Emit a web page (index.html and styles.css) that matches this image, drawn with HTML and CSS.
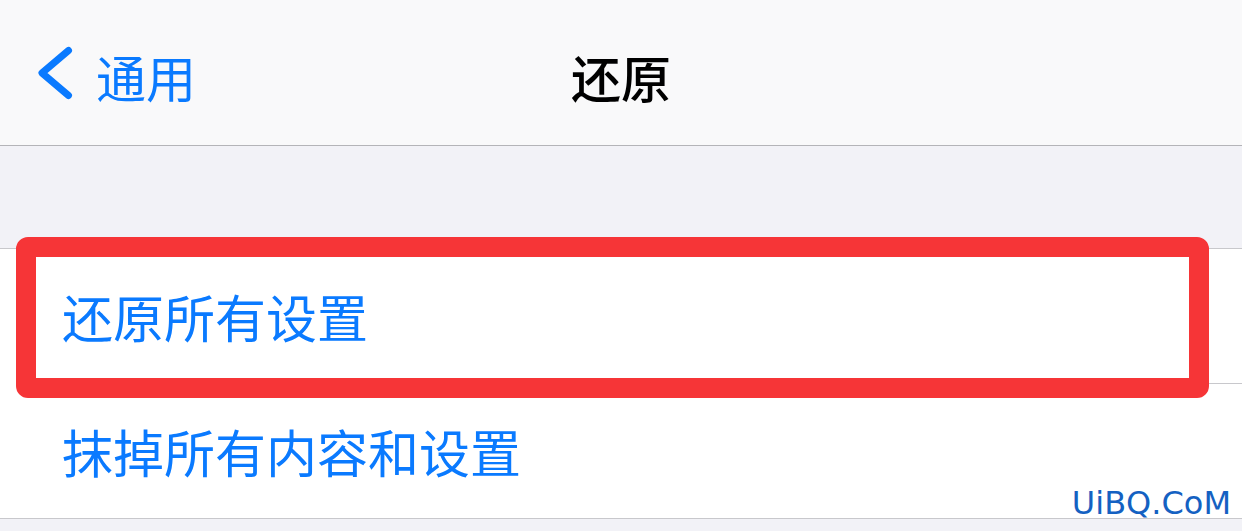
FILE: index.html
```html
<!DOCTYPE html>
<html lang="zh-CN">
<head>
<meta charset="utf-8">
<title>还原</title>
<link rel="stylesheet" href="styles.css">
</head>
<body>
  <header class="nav">
    <div class="back">
      <svg class="chevron" width="40" height="60" viewBox="0 0 40 60" aria-hidden="true">
        <polyline points="32.5,7.5 6,30 32.5,52.5" fill="none" stroke="#0a7aff" stroke-width="7" stroke-linecap="round" stroke-linejoin="round"/>
      </svg>
      <span class="back-label">通用</span>
    </div>
    <h1 class="title">还原</h1>
    <div class="nav-spacer"></div>
  </header>
  <div class="gap"></div>
  <section class="group">
    <div class="row row-first">
      <span class="row-label">还原所有设置</span>
      <div class="highlight"></div>
    </div>
    <div class="row row-last">
      <span class="row-label">抹掉所有内容和设置</span>
      <span class="watermark">UiBQ.CoM</span>
    </div>
  </section>
</body>
</html>
```
FILE: styles.css
```css
html, body {
  margin: 0;
  padding: 0;
}
body {
  background: #f2f2f7;
  font-family: "Noto Sans CJK SC", "Noto Sans", sans-serif;
  height: 531px;
  overflow: hidden;
}
.nav {
  height: 139px;
  padding-top: 6px;
  background: #f9f9fa;
  border-bottom: 1px solid #b4b4b8;
  display: grid;
  grid-template-columns: 1fr auto 1fr;
  align-items: center;
}
.back {
  display: flex;
  align-items: center;
  padding-left: 36px;
  gap: 20px;
  color: #0a7aff;
}
.chevron {
  display: block;
  margin-top: -6px;
}
.back-label {
  font-size: 50px;
  line-height: 1;
}
.title {
  margin: 0;
  font-size: 50px;
  font-weight: 500;
  line-height: 1;
  color: #000;
}
.gap {
  height: 102px;
}
.group {
  background: #fff;
  border-top: 1px solid #c8c8cc;
  border-bottom: 1px solid #c8c8cc;
}
.row {
  position: relative;
  display: flex;
  align-items: center;
  padding-left: 62px;
}
.row-first {
  height: 135px;
}
.row-first::after {
  content: "";
  position: absolute;
  left: 62px;
  right: 0;
  bottom: 0;
  height: 1px;
  background: #c8c8cc;
}
.row-last {
  height: 134px;
}
.row-label {
  font-size: 51px;
  line-height: 1;
  color: #0a7aff;
}
.highlight {
  position: absolute;
  z-index: 2;
  left: 16px;
  right: 33px;
  top: -12px;
  bottom: -14px;
  border: 20px solid #f63537;
  border-radius: 12px;
}
.watermark {
  position: absolute;
  right: 11px;
  bottom: -4px;
  font-family: "DejaVu Sans", sans-serif;
  font-size: 32px;
  color: #1461c2;
  line-height: 1.2;
}
```
